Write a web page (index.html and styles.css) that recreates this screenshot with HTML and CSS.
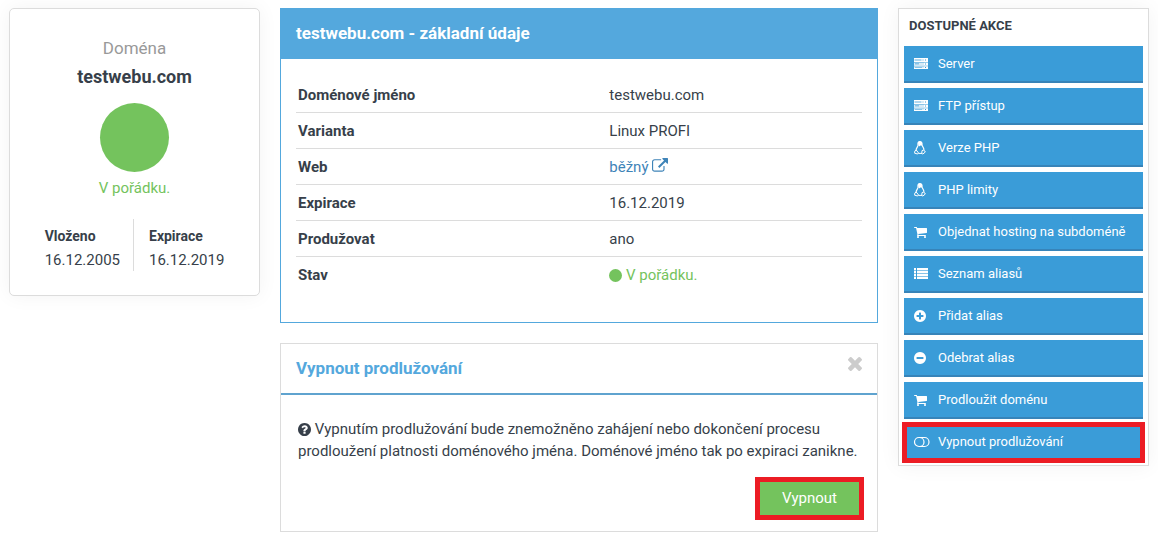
FILE: index.html
```
<!DOCTYPE html>
<html lang="cs">
<head>
    <meta charset="UTF-8">
    <meta name="viewport" content="width=device-width, initial-scale=1.0">
    <title>testwebu.com</title>
    <link rel="stylesheet" href="styles.css">
</head>
<body>
    <svg class="sprite" aria-hidden="true">
        <symbol id="server" viewBox="0 0 14 14">
            <path fill-opacity=".8" d="M0 1h14v4H0zM0 5h14v4H0zM0 9h14v3H0z"/>
            <path d="M0 1h14v1H0zM0 4h14v1H0zM0 8h14v1H0zM0 11h14v1H0zM10 1h4v11h-4z"/>
            <path class="server-gap" d="M0 5h14v.5H0zM0 8.700h14v.5H0zM1 2.700h6v.6H1zM1 6.600h4v.6H1zM1 10.200h7v.6H1zM11 2.500h1v1h-1zM11 6.400h1v1h-1zM11 10h1v1h-1z"/>
        </symbol>
        <symbol id="linux" viewBox="0 0 14 14">
            <path d="M4 4.200C3.700 2 4.200.7 5.900.7s2.300 1.300 2.100 3c0 1.500 1.800 2.800 2 5.200M4 4.200C4 5.800 2.300 7 2.100 9" fill="none" stroke="currentColor" stroke-width="1.200"/>
            <path d="M4 1.500 5.900.5l2 1.200.2 3-1.300-.4L5.800 5.300 4.500 5z"/>
            <path d="M2.200 9 4.500 11.900 3.700 13 .6 12.200.9 9.900zM9.800 9l1.600 2-2.600 2-1-.7.2-2.700zM4.500 12.400h3.600" fill="none" stroke="currentColor"/>
        </symbol>
        <symbol id="cart" viewBox="64 0 1792 1792">
            <path d="M704 1536q0 52-38 90t-90 38-90-38-38-90 38-90 90-38 90 38 38 90zm896 0q0 52-38 90t-90 38-90-38-38-90 38-90 90-38 90 38 38 90zm128-1088v512q0 24-16.500 42.500t-40.500 21.500l-1044 122q13 60 13 70 0 16-24 64h920q26 0 45 19t19 45-19 45-45 19h-1024q-26 0-45-19t-19-45q0-11 8-31.500t16-36 21.500-40 15.500-29.500l-177-823h-204q-26 0-45-19t-19-45 19-45 45-19h256q16 0 28.500 6.500t19.500 15.500 13 24.500 8 26 5.500 29.500 4.500 26h1201q26 0 45 19t19 45z"/>
        </symbol>
        <symbol id="list" viewBox="0 0 14 14">
            <path fill-opacity=".4" d="M0 1h2v11H0zM3 1h11v11H3z"/>
            <path d="M0 1h2v2H0zM3 1h11v2H3zM0 4h2v2H0zM3 4h11v2H3zM0 7h2v2H0zM3 7h11v2H3zM0 10h2v2H0zM3 10h11v2H3z"/>
        </symbol>
        <symbol id="plus" viewBox="128 0 1792 1792">
            <path d="M1344 960v-128q0-26-19-45t-45-19h-256v-256q0-26-19-45t-45-19h-128q-26 0-45 19t-19 45v256h-256q-26 0-45 19t-19 45v128q0 26 19 45t45 19h256v256q0 26 19 45t45 19h128q26 0 45-19t19-45v-256h256q26 0 45-19t19-45zm320-64q0 209-103 385.500t-279.500 279.500-385.500 103-385.500-103-279.500-279.500-103-385.500 103-385.500 279.500-279.500 385.500-103 385.500 103 279.500 279.500 103 385.500z"/>
        </symbol>
        <symbol id="minus" viewBox="128 0 1792 1792">
            <path d="M1344 960v-128q0-26-19-45t-45-19h-768q-26 0-45 19t-19 45v128q0 26 19 45t45 19h768q26 0 45-19t19-45zm320-64q0 209-103 385.500t-279.500 279.500-385.500 103-385.500-103-279.500-279.500-103-385.500 103-385.500 279.500-279.500 385.500-103 385.500 103 279.500 279.500 103 385.500z"/>
        </symbol>
        <symbol id="toggle" viewBox="0 0 14 14">
            <path d="M5 2.500h5.500a4.500 4.500 0 0 1 0 9H5a4.500 4.500 0 0 1 0-9zM5.500 2.500a4.500 4.500 0 0 1 0 9M10 2.500" fill="none" stroke="currentColor" stroke-width="1.200"/>
        </symbol>
        <symbol id="external" viewBox="0 0 1792 1792">
            <path d="M1408 928v320q0 119-84.500 203.500t-203.500 84.500h-832q-119 0-203.500-84.500t-84.500-203.500v-832q0-119 84.500-203.500t203.500-84.500h704q14 0 23 9t9 23v64q0 14-9 23t-23 9h-704q-66 0-113 47t-47 113v832q0 66 47 113t113 47h832q66 0 113-47t47-113v-320q0-14 9-23t23-9h64q14 0 23 9t9 23zm384-864v512q0 26-19 45t-45 19-45-19l-176-176-652 652q-10 10-23 10t-23-10l-114-114q-10-10-10-23t10-23l652-652-176-176q-19-19-19-45t19-45 45-19h512q26 0 45 19t19 45z"/>
        </symbol>
        <symbol id="question" viewBox="128 128 1536 1536">
            <path d="M1024 1376v-192q0-14-9-23t-23-9h-192q-14 0-23 9t-9 23v192q0 14 9 23t23 9h192q14 0 23-9t9-23zm256-672q0-88-55.500-163t-138.500-116-170-41q-243 0-371 213-15 24 8 42l132 100q7 6 19 6 16 0 25-12 53-68 86-92 34-24 86-24 48 0 85.500 26t37.500 59q0 38-20 61t-68 45q-63 28-115.500 86.500t-52.500 125.500v36q0 14 9 23t23 9h192q14 0 23-9t9-23q0-19 21.500-49.500t54.500-49.500q32-18 49-28.500t46-35 44.500-48 28-60.500 12.500-81zm384 192q0 209-103 385.500t-279.500 279.500-385.500 103-385.500-103-279.500-279.500-103-385.500 103-385.500 279.500-279.500 385.500-103 385.500 103 279.500 279.500 103 385.500z"/>
        </symbol>
        <symbol id="times" viewBox="302 366 1188 1188">
            <path transform="translate(0 -64)" d="M1490 1386q0 40-28 68l-136 136q-28 28-68 28t-68-28l-294-294-294 294q-28 28-68 28t-68-28l-136-136q-28-28-28-68t28-68l294-294-294-294q-28-28-28-68t28-68l136-136q28-28 68-28t68 28l294 294 294-294q28-28 68-28t68 28l136 136q28 28 28 68t-28 68l-294 294 294 294q28 28 28 68z"/>
        </symbol>
    </svg>

    <div class="page">
        <section class="summary">
            <p class="summary-label">Doména</p>
            <h1>testwebu.com</h1>
            <div class="status-circle"></div>
            <p class="status">V pořádku.</p>
            <dl class="dates">
                <div>
                    <dt>Vloženo</dt>
                    <dd>16.12.2005</dd>
                </div>
                <div>
                    <dt>Expirace</dt>
                    <dd>16.12.2019</dd>
                </div>
            </dl>
        </section>

        <main>
            <section class="panel panel-primary">
                <h2>testwebu.com - základní údaje</h2>
                <div class="panel-details">
                    <table>
                        <tr><th scope="row">Doménové jméno</th><td>testwebu.com</td></tr>
                        <tr><th scope="row">Varianta</th><td>Linux PROFI</td></tr>
                        <tr><th scope="row">Web</th><td><a href="#">běžný <svg class="icon-external" aria-hidden="true"><use href="#external"/></svg></a></td></tr>
                        <tr><th scope="row">Expirace</th><td>16.12.2019</td></tr>
                        <tr><th scope="row">Produžovat</th><td>ano</td></tr>
                        <tr><th scope="row">Stav</th><td class="status"><span class="dot"></span> V pořádku.</td></tr>
                    </table>
                </div>
            </section>

            <section class="panel">
                <header class="panel-header">
                    <h2>Vypnout prodlužování</h2>
                    <button type="button" class="close" aria-label="Zavřít"><svg aria-hidden="true"><use href="#times"/></svg></button>
                </header>
                <form class="panel-form">
                    <p><svg class="icon-question" aria-hidden="true"><use href="#question"/></svg> Vypnutím prodlužování bude znemožněno zahájení nebo dokončení procesu prodloužení platnosti doménového jména. Doménové jméno tak po expiraci zanikne.</p>
                    <button type="button" class="btn highlight">Vypnout</button>
                </form>
            </section>
        </main>

        <aside class="actions">
            <h2>Dostupné akce</h2>
            <nav>
                <a href="#"><svg aria-hidden="true"><use href="#server"/></svg>Server</a>
                <a href="#"><svg aria-hidden="true"><use href="#server"/></svg>FTP přístup</a>
                <a href="#"><svg aria-hidden="true"><use href="#linux"/></svg>Verze PHP</a>
                <a href="#"><svg aria-hidden="true"><use href="#linux"/></svg>PHP limity</a>
                <a href="#"><svg aria-hidden="true"><use href="#cart"/></svg>Objednat hosting na subdoméně</a>
                <a href="#"><svg aria-hidden="true"><use href="#list"/></svg>Seznam aliasů</a>
                <a href="#"><svg aria-hidden="true"><use href="#plus"/></svg>Přidat alias</a>
                <a href="#"><svg aria-hidden="true"><use href="#minus"/></svg>Odebrat alias</a>
                <a href="#"><svg aria-hidden="true"><use href="#cart"/></svg>Prodloužit doménu</a>
                <a href="#" class="highlight"><svg aria-hidden="true"><use href="#toggle"/></svg>Vypnout prodlužování</a>
            </nav>
        </aside>
    </div>
</body>
</html>
```
FILE: styles.css
```
* {
    box-sizing: border-box;
}
body {
    margin: 0;
    background-color: #fff;
    color: #373f4a;
    font-family: Roboto, sans-serif;
    font-size: 15px;
    line-height: 22px;
}
h1, h2, p, dl, dd {
    margin: 0;
}
svg {
    fill: currentColor;
}
symbol {
    overflow: visible;
}
.sprite {
    display: none;
}
.page {
    display: grid;
    grid-template-columns: 251px 1fr 251px;
    align-items: start;
    gap: 20px;
    padding: 8px 9px;
}

/* Summary card */
.summary {
    display: flex;
    flex-direction: column;
    align-items: center;
    padding: 28px 16px 24px;
    background-color: #fff;
    border: 1px solid #dcdcdc;
    border-radius: 5px;
    box-shadow: 0 0 20px rgba(0, 0, 0, 0.05);
}
.summary-label {
    color: #999;
    font-size: 17px;
}
.summary h1 {
    margin: 7px 0 15px;
    font-size: 18px;
    font-weight: 700;
}
.status-circle {
    width: 69px;
    height: 69px;
    margin-bottom: 5px;
    border-radius: 50%;
    background-color: #74c35d;
}
.status {
    color: #74c35d;
}
.dates {
    display: flex;
    margin-top: 20px;
}
.dates div {
    padding: 6px 0 0 15px;
}
.dates div:first-child {
    padding: 6px 13px 0 0;
    border-right: 1px solid #dcdcdc;
}
.dates dt {
    font-size: 14px;
    font-weight: 700;
}
.dates dd {
    margin-top: 2px;
}

/* Panels */
main {
    display: flex;
    flex-direction: column;
    gap: 20px;
}
.panel {
    border: 1px solid #dcdcdc;
    background-color: #fff;
}
.panel h2 {
    font-size: 17px;
    font-weight: 700;
}
.panel-primary {
    border-color: #54a8dd;
}
.panel-primary h2 {
    padding: 13px 15px 15px;
    background-color: #54a8dd;
    color: #fff;
}
.panel-details {
    padding: 18px 15px 30px;
}
table {
    width: 100%;
    border-collapse: collapse;
}
tr + tr {
    border-top: 1px solid #dcdcdc;
}
th, td {
    padding: 7px 2px 6px;
    text-align: left;
}
th {
    width: 55%;
    font-weight: 700;
}
a {
    color: #3f84b8;
    text-decoration: none;
}
.icon-external {
    width: 16px;
    height: 16px;
    vertical-align: -2px;
}
.dot {
    display: inline-block;
    width: 13px;
    height: 13px;
    border-radius: 50%;
    background-color: #74c35d;
    vertical-align: -2px;
}
.panel-header {
    display: flex;
    justify-content: space-between;
    align-items: flex-start;
    padding: 13px 15px 14px;
    border-bottom: 2px solid #5fa3cf;
    color: #54a8dd;
}
.close {
    padding: 0;
    border: 0;
    background: none;
    color: #ccc;
}
.close svg {
    display: block;
    width: 14px;
    height: 14px;
}
.panel-form {
    display: flex;
    flex-direction: column;
    align-items: flex-end;
    gap: 17px;
    padding: 23px 15px 13px 17px;
}
.icon-question {
    width: 13px;
    height: 13px;
    vertical-align: -2px;
}
.btn {
    padding: 8px 25px;
    border: 0;
    border-bottom: 1px solid #61a34e;
    background-color: #74c35d;
    color: #fff;
    font: inherit;
}
.highlight {
    outline: 5px solid #ec1c24;
    outline-offset: -3px;
}

/* Actions menu */
.actions {
    padding: 6px 5px 4px;
    background-color: #fff;
    border: 1px solid #dcdcdc;
    box-shadow: 0 0 20px rgba(0, 0, 0, 0.05);
}
.actions h2 {
    padding: 0 5px 9px;
    font-size: 13px;
    font-weight: 700;
    text-transform: uppercase;
}
.actions nav {
    display: flex;
    flex-direction: column;
    gap: 5px;
}
.actions a {
    display: flex;
    align-items: center;
    gap: 10px;
    padding: 7px 10px 6px;
    border-bottom: 2px solid #3784b9;
    background-color: #3a9cd8;
    color: #fff;
    font-size: 13px;
}
.actions svg {
    width: 14px;
    height: 14px;
    overflow: visible;
}
.server-gap {
    fill: #3a9cd8;
}
```
